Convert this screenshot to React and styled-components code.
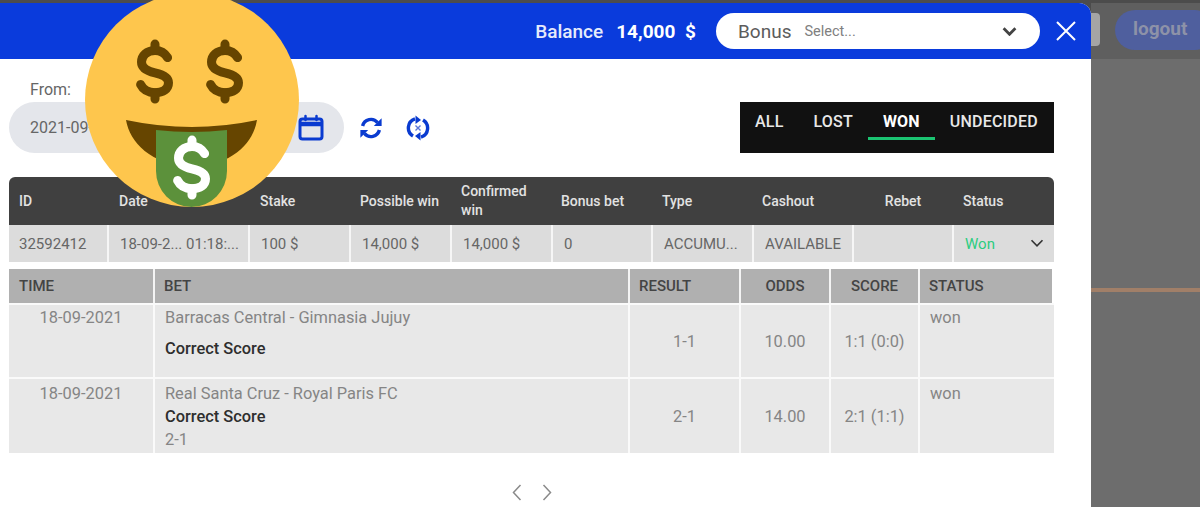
import React from 'react';
import styled, { createGlobalStyle } from 'styled-components';

const Global = createGlobalStyle`
    html, body { margin: 0; padding: 0; }
    body { font-family: Roboto, "Liberation Sans", sans-serif; background: #6d6d6d; }
    * { box-sizing: border-box; }
`

const Screen = styled.div`
    position: relative;
    width: 1200px;
    height: 507px;
    overflow: hidden;
    display: flex;
    padding-top: 3px;
    background: #4c4c4c;
`

const Modal = styled.div`
    width: 1091px;
    flex: none;
    background: #fff;
    border-top-right-radius: 12px;
    overflow: hidden;
`

const ModalHeader = styled.header`
    height: 56px;
    background: #0a3bdc;
    color: #fff;
    display: flex;
    align-items: center;
    justify-content: flex-end;
    padding-right: 15px;
`

const Balance = styled.span`
    font-size: 19px;
    font-weight: 500;
    color: #e6ebfb;
`

const Amount = styled.span`
    font-size: 19px;
    font-weight: 700;
    margin-left: 13px;
    word-spacing: 5px;
`

const BonusSelect = styled.div`
    width: 324px;
    height: 36px;
    margin-left: 20px;
    border-radius: 18px;
    background: #fff;
    display: flex;
    align-items: center;
    padding: 0 23px 0 22px;
`

const BonusLabel = styled.span`
    font-size: 19px;
    color: #5c5c5c;
`

const BonusHint = styled.span`
    font-size: 14.5px;
    color: #808080;
    margin-left: 13px;
    flex: 1;
`

const CloseButton = styled.svg`
    width: 20px;
    height: 20px;
    margin-left: 16px;
`

const Body = styled.div`
    padding: 21px 37px 0 9px;
`

const Filters = styled.div`
    display: flex;
    align-items: flex-end;
`

const DateField = styled.div`
    width: 335px;
`

const FieldLabel = styled.div`
    font-size: 16px;
    line-height: 20px;
    color: #666;
    padding-left: 21px;
    margin-bottom: 2px;
`

const DatePill = styled.div`
    height: 51px;
    border-radius: 26px;
    background: #e4e6eb;
    display: flex;
    align-items: center;
    justify-content: space-between;
    padding: 0 20px 0 21px;
    font-size: 16px;
    color: #666;
`

const ActionIcon = styled.span`
    width: 24px;
    height: 51px;
    margin-left: ${p => p.$left}px;
    display: flex;
    align-items: center;
    justify-content: center;
`

const Tabs = styled.nav`
    margin-left: auto;
    width: 314px;
    height: 51px;
    display: flex;
    background: #111;
`

const Tab = styled.div`
    height: 38px;
    padding: 9px 15px 0;
    line-height: 22px;
    font-size: 16px;
    letter-spacing: 0.2px;
    font-weight: ${p => (p.$active ? 700 : 500)};
    color: ${p => (p.$active ? '#fff' : '#e8e8e8')};
    border-bottom: 3px solid ${p => (p.$active ? '#1bc472' : 'transparent')};
`

const Bets = styled.div`
    margin-top: 24px;
`

const BetsHead = styled.div`
    height: 48px;
    display: grid;
    grid-template-columns: 100px 141px 100px 101px 100px 101px 100px 101px 100px 101px;
    background: #404040;
    border-radius: 6px 6px 0 0;
`

const HeadCell = styled.div`
    display: flex;
    align-items: center;
    justify-content: ${p => (p.$center ? 'center' : 'flex-start')};
    padding: ${p => (p.$center ? 0 : '0 10px')};
    font-size: 14px;
    line-height: 19px;
    font-weight: 500;
    color: #e2e2e2;
`

const BetsRow = styled.div`
    height: 37px;
    display: grid;
    grid-template-columns: 98px 141px 101px 101px 101px 100px 101px 100px 100px 102px;
    background: #dcdcdc;
`

const RowCell = styled.div`
    display: flex;
    align-items: center;
    justify-content: space-between;
    padding: 0 10px 0 ${p => (p.$first ? 10 : 11)}px;
    border-left: ${p => (p.$first ? 0 : '2px solid #f6f6f6')};
    font-size: 15px;
    color: ${p => p.$color || '#666'};
    white-space: nowrap;
`

const detailColumns = '144px 475px 111px 90px 89px 136px';

const Details = styled.div`
    margin-top: 7px;
`

const DetailHead = styled.div`
    height: 34px;
    display: grid;
    grid-template-columns: ${detailColumns};
    background: #b0b0b0;
    border-right: 2px solid #fff;
`

const DetailHeadCell = styled.div`
    display: flex;
    align-items: center;
    justify-content: ${p => (p.$center ? 'center' : 'flex-start')};
    padding-left: ${p => (p.$center ? 0 : p.$first ? 10 : 9)}px;
    border-left: ${p => (p.$first ? 0 : '2px solid #f4f4f4')};
    font-size: 15px;
    font-weight: 500;
    color: #444;
`

const DetailRow = styled.div`
    height: ${p => p.$height}px;
    display: grid;
    grid-template-columns: ${detailColumns};
    background: #e8e8e8;
    border-top: 2px solid #fafafa;
`

const DetailCell = styled.div`
    display: flex;
    flex-direction: column;
    align-items: ${p => (p.$left ? 'flex-start' : 'center')};
    justify-content: ${p => (p.$middle ? 'center' : 'flex-start')};
    padding-top: ${p => p.$top || 0}px;
    padding-left: ${p => (p.$left ? 10 : 0)}px;
    border-left: ${p => (p.$first ? 0 : '2px solid #fafafa')};
    font-size: 16.4px;
    line-height: 23px;
    color: #858585;
`

const Market = styled.div`
    margin-top: ${p => p.$gap}px;
    font-weight: 500;
    color: #2e2e2e;
`

const Pager = styled.div`
    display: flex;
    justify-content: center;
    gap: 20px;
    margin-top: 31px;
`

const Backdrop = styled.aside`
    flex: 1;
    display: flex;
    flex-direction: column;
`

const BackdropTop = styled.div`
    height: 56px;
    background: #5f5f5f;
    display: flex;
    align-items: flex-start;
`

const ScrollStub = styled.div`
    width: 9px;
    height: 33px;
    margin-top: 10px;
    background: #a5a5a5;
    border-radius: 0 4px 4px 0;
`

const LogoutButton = styled.div`
    width: 100px;
    height: 40px;
    margin: 7px -15px 0 15px;
    flex: none;
    border-radius: 20px;
    background: #4f5f9e;
    color: #8d92a8;
    font-size: 19px;
    font-weight: 700;
    line-height: 38px;
    padding-left: 18px;
`

const BackdropRest = styled.div`
    flex: 1;
    background: #6d6d6d;
    padding-top: 229px;
`

const OrangeLine = styled.div`
    height: 4px;
    background: #a17f68;
`

const Emoji = styled.svg`
    position: absolute;
    left: 85px;
    top: -7px;
    width: 214px;
    height: 214px;
`

function Dollar({ x, y, color }) {
    return (
        <g transform={`translate(${x} ${y}) scale(0.9)`} fill="none" stroke={color} strokeWidth="10" strokeLinecap="round" strokeLinejoin="round">
            <path d="M14 -16C11 -21 6 -24 0 -24C-9 -24 -15 -18 -15 -11C-15 -4 -9 -1 0 1C9 3 15 6 15 12C15 19 9 23 0 23C-7 23 -13 20 -16 14" />
            <path d="M0 -31V-24M0 23V30" />
        </g>
    )
}

function MoneyFace() {
    return (
        <Emoji viewBox="0 0 214 214">
            <circle cx="107" cy="107" r="107" fill="#fec64d" />
            <Dollar x={70} y={79} color="#664500" />
            <Dollar x={140} y={79} color="#664500" />
            <path d="M41 127Q107 141 172 127C168 150 150 170 107 176C65 170 45 150 41 127Z" fill="#664500" />
            <path d="M71 137Q107 141 142 137V178A35.5 36 0 0 1 71 178Z" fill="#5c913b" />
            <Dollar x={107} y={175} color="#fff" />
        </Emoji>
    )
}

function CalendarIcon() {
    return (
        <svg width="26" height="28" viewBox="0 0 26 28" fill="none">
            <rect x="2" y="5" width="22" height="20" rx="2.5" stroke="#0a3bd0" strokeWidth="3" />
            <path d="M2 10H24" stroke="#0a3bd0" strokeWidth="4.5" />
            <path d="M7.5 2V6M18.5 2V6" stroke="#0a3bd0" strokeWidth="2.5" strokeLinecap="round" />
        </svg>
    )
}

function RefreshIcon() {
    return (
        <svg width="24" height="24" viewBox="0 0 24 24" fill="none">
            <path d="M3.6 10A8.6 8.6 0 0 1 18.6 6.6" stroke="#0a3bd0" strokeWidth="3.4" />
            <path d="M22.6 2.2V10H14.8Z" fill="#0a3bd0" />
            <path d="M20.4 14A8.6 8.6 0 0 1 5.4 17.4" stroke="#0a3bd0" strokeWidth="3.4" />
            <path d="M1.4 21.8V14H9.2Z" fill="#0a3bd0" />
        </svg>
    )
}

function RefreshCancelIcon() {
    return (
        <svg width="24" height="26" viewBox="0 0 24 26" fill="none">
            <path d="M9 3.8A9.5 9.5 0 0 0 7 21" stroke="#0a3bd0" strokeWidth="3.4" />
            <path d="M9.5 0.5L15 5L9.5 9Z" fill="#0a3bd0" />
            <path d="M15 22.2A9.5 9.5 0 0 0 17 5" stroke="#0a3bd0" strokeWidth="3.4" />
            <path d="M14.5 25.5L9 21L14.5 17Z" fill="#0a3bd0" />
            <path d="M9.5 10.5L14.5 15.5M14.5 10.5L9.5 15.5" stroke="#5a76d8" strokeWidth="1.4" />
        </svg>
    )
}

function ChevronDown({ width, color, strokeWidth }) {
    return (
        <svg width={width} height={width * 0.6} viewBox="0 0 14 8.4" fill="none">
            <path d="M1.5 1.2L7 6.8L12.5 1.2" stroke={color} strokeWidth={strokeWidth} />
        </svg>
    )
}

function PagerArrow({ d }) {
    return (
        <svg width="10" height="17" viewBox="0 0 10 17" fill="none">
            <path d={d} stroke="#8a8a8a" strokeWidth="1.5" />
        </svg>
    )
}

function App() {
    return (
        <Screen>
            <Global />
            <Modal>
                <ModalHeader>
                    <Balance>Balance</Balance>
                    <Amount>14,000 $</Amount>
                    <BonusSelect>
                        <BonusLabel>Bonus</BonusLabel>
                        <BonusHint>Select...</BonusHint>
                        <ChevronDown width={15} color="#444" strokeWidth={2.6} />
                    </BonusSelect>
                    <CloseButton viewBox="0 0 20 20">
                        <path d="M1 1L19 19M19 1L1 19" stroke="#fff" strokeWidth="2" />
                    </CloseButton>
                </ModalHeader>
                <Body>
                    <Filters>
                        <DateField>
                            <FieldLabel>From:</FieldLabel>
                            <DatePill>
                                <span>2021-09-18</span>
                                <CalendarIcon />
                            </DatePill>
                        </DateField>
                        <ActionIcon $left={15}><RefreshIcon /></ActionIcon>
                        <ActionIcon $left={23}><RefreshCancelIcon /></ActionIcon>
                        <Tabs>
                            <Tab>ALL</Tab>
                            <Tab>LOST</Tab>
                            <Tab $active>WON</Tab>
                            <Tab>UNDECIDED</Tab>
                        </Tabs>
                    </Filters>
                    <Bets>
                        <BetsHead>
                            <HeadCell>ID</HeadCell>
                            <HeadCell>Date</HeadCell>
                            <HeadCell>Stake</HeadCell>
                            <HeadCell>Possible win</HeadCell>
                            <HeadCell>Confirmed win</HeadCell>
                            <HeadCell>Bonus bet</HeadCell>
                            <HeadCell>Type</HeadCell>
                            <HeadCell>Cashout</HeadCell>
                            <HeadCell $center>Rebet</HeadCell>
                            <HeadCell>Status</HeadCell>
                        </BetsHead>
                        <BetsRow>
                            <RowCell $first>32592412</RowCell>
                            <RowCell>18-09-2... 01:18:...</RowCell>
                            <RowCell>100 $</RowCell>
                            <RowCell>14,000 $</RowCell>
                            <RowCell>14,000 $</RowCell>
                            <RowCell>0</RowCell>
                            <RowCell>ACCUMU...</RowCell>
                            <RowCell>AVAILABLE</RowCell>
                            <RowCell></RowCell>
                            <RowCell $color="#2dcc80">
                                Won
                                <ChevronDown width={14} color="#333" strokeWidth={1.6} />
                            </RowCell>
                        </BetsRow>
                    </Bets>
                    <Details>
                        <DetailHead>
                            <DetailHeadCell $first>TIME</DetailHeadCell>
                            <DetailHeadCell>BET</DetailHeadCell>
                            <DetailHeadCell>RESULT</DetailHeadCell>
                            <DetailHeadCell $center>ODDS</DetailHeadCell>
                            <DetailHeadCell $center>SCORE</DetailHeadCell>
                            <DetailHeadCell>STATUS</DetailHeadCell>
                        </DetailHead>
                        <DetailRow $height={74}>
                            <DetailCell $first $top={1}>18-09-2021</DetailCell>
                            <DetailCell $left $top={1}>
                                Barracas Central - Gimnasia Jujuy
                                <Market $gap={8}>Correct Score</Market>
                            </DetailCell>
                            <DetailCell $middle>1-1</DetailCell>
                            <DetailCell $middle>10.00</DetailCell>
                            <DetailCell $middle>1:1 (0:0)</DetailCell>
                            <DetailCell $left $top={1}>won</DetailCell>
                        </DetailRow>
                        <DetailRow $height={76}>
                            <DetailCell $first $top={3}>18-09-2021</DetailCell>
                            <DetailCell $left $top={3}>
                                Real Santa Cruz - Royal Paris FC
                                <Market $gap={0}>Correct Score</Market>
                                2-1
                            </DetailCell>
                            <DetailCell $middle>2-1</DetailCell>
                            <DetailCell $middle>14.00</DetailCell>
                            <DetailCell $middle>2:1 (1:1)</DetailCell>
                            <DetailCell $left $top={3}>won</DetailCell>
                        </DetailRow>
                    </Details>
                    <Pager>
                        <PagerArrow d="M8.5 1L1.5 8.5L8.5 16" />
                        <PagerArrow d="M1.5 1L8.5 8.5L1.5 16" />
                    </Pager>
                </Body>
            </Modal>
            <Backdrop>
                <BackdropTop>
                    <ScrollStub />
                    <LogoutButton>logout</LogoutButton>
                </BackdropTop>
                <BackdropRest>
                    <OrangeLine />
                </BackdropRest>
            </Backdrop>
            <MoneyFace />
        </Screen>
    )
}

export default App;
